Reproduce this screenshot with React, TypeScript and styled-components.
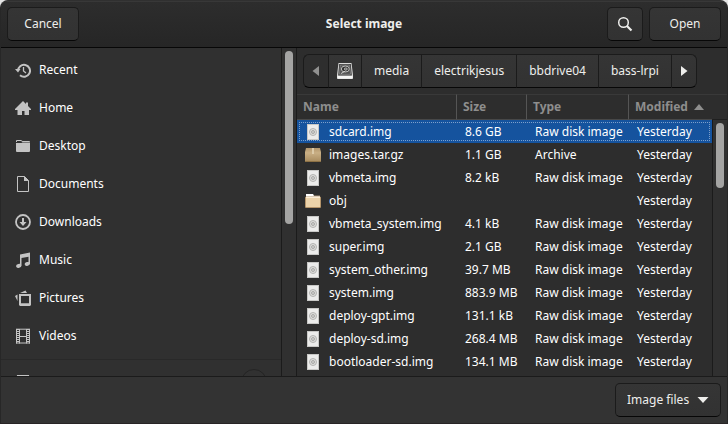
import React from "react";
import styled, { createGlobalStyle, css } from "styled-components";

const GlobalStyle = createGlobalStyle`
  * { box-sizing: border-box; }
  html, body { margin: 0; height: 100%; background: #e6e6e6; overflow: hidden; }
  body, button, select, table { font-family: "Noto Sans", sans-serif; font-size: 12px; line-height: 16px; }
`;

const Dialog = styled.div`
  display: flex;
  flex-direction: column;
  height: 100vh;
  overflow: hidden;
  color: #eeeeec;
  background: #333333;
  border: 1px solid #272727;
  border-top-color: #303030;
  border-bottom-color: #282425;
  border-radius: 8px 8px 0 0;
`;

const HeaderBar = styled.header`
  flex: none;
  display: grid;
  grid-template-columns: 1fr auto 1fr;
  align-items: center;
  height: 47px;
  padding: 0 6px;
  background: linear-gradient(#2d2d2d, #262626);
  box-shadow: inset 0 1px #383838;
  border-bottom: 1px solid #070707;
`;

const Title = styled.h1`
  margin: 0;
  font-size: 12px;
  font-weight: 700;
`;

const Actions = styled.div<{ $end?: boolean }>`
  display: flex;
  gap: 6px;
  justify-content: ${(p) => (p.$end ? "flex-end" : "flex-start")};
`;

const raised = css`
  color: #eeeeec;
  background: linear-gradient(#353535, #323232);
  border: 1px solid #1b1b1b;
  border-bottom-color: #070707;
`;

const Button = styled.button<{ $icon?: boolean }>`
  ${raised}
  display: flex;
  align-items: center;
  justify-content: center;
  height: 34px;
  min-width: ${(p) => (p.$icon ? 36 : 72)}px;
  padding: 0 ${(p) => (p.$icon ? 9 : 15)}px;
  border-radius: 5px;
`;

const Body = styled.div`
  flex: 1;
  min-height: 0;
  display: flex;
`;

const Sidebar = styled.nav`
  flex: none;
  width: 280px;
  overflow: hidden;
  background: #303030;
`;

const Places = styled.ul`
  list-style: none;
  margin: 0;
  padding: 3px 0;
`;

const Place = styled.li<{ $separated?: boolean }>`
  display: flex;
  align-items: center;
  justify-content: space-between;
  height: 38px;
  padding: 0 14px;
  ${(p) =>
    p.$separated &&
    css`
      box-shadow: 0 -3px #303030, 0 -4px #292929;
      margin-top: 8px;
    `}
`;

const PlaceLink = styled.a`
  display: flex;
  align-items: center;
  gap: 8px;
  color: #ffffff;
  text-decoration: none;
  svg { color: #c3c3c3; }
`;

const Eject = styled.button`
  width: 26px;
  height: 26px;
  padding: 0;
  border: 1px solid #242424;
  border-radius: 50%;
  background: #313131;
`;

const Icon = styled.svg`
  display: block;
  flex: none;
`;

const ScrollTrack = styled.div<{ $end?: boolean }>`
  flex: ${(p) => (p.$end ? "1" : "none")};
  width: ${(p) => (p.$end ? 15 : 16)}px;
  padding: 3px;
  background: #303030;
  border: 0 solid #1b1b1b;
  border-width: ${(p) => (p.$end ? "0 0 0 1px" : "0 1px")};
`;

const ScrollThumb = styled.div<{ $size: number }>`
  height: ${(p) => p.$size}px;
  width: 8px;
  margin: 0 auto;
  border-radius: 4px;
  background: #a4a4a3;
`;

const Browser = styled.main`
  flex: 1;
  min-width: 0;
  display: flex;
  flex-direction: column;
  background: #2d2d2d;
`;

const PathBar = styled.nav`
  flex: none;
  display: flex;
  height: 46px;
  padding: 6px;
`;

const PathButton = styled.button`
  ${raised}
  display: flex;
  align-items: center;
  justify-content: center;
  height: 34px;
  padding: 0 12px;
  border-right-width: 0;
  &:has(svg:only-child) { padding: 0 8px; }
  &:first-child { border-radius: 6px 0 0 6px; padding-left: 9px; background: #2e2e2e; color: #919190; }
  &:last-child { border-radius: 0 6px 6px 0; border-right-width: 1px; }
`;

const Listing = styled.div`
  flex: 1;
  min-height: 0;
  display: flex;
  overflow: hidden;
`;

const TableArea = styled.div`
  flex: 1;
  min-width: 0;
  overflow: hidden;
`;

const ListScroll = styled.div`
  flex: none;
  width: 15px;
  display: flex;
  flex-direction: column;
`;

const HeaderFill = styled.div`
  flex: none;
  height: 26px;
  border: solid #393939;
  border-width: 1px 0;
  border-bottom-color: #1f1f1f;
`;

const Table = styled.table`
  width: 100%;
  table-layout: fixed;
  border-collapse: separate;
  border-spacing: 0;
`;

const Col = styled.col<{ $w?: number }>`
  width: ${(p) => (p.$w ? `${p.$w}px` : "auto")};
`;

const Th = styled.th`
  height: 26px;
  padding: 0 0 0 6px;
  text-align: left;
  font-weight: 700;
  color: #8e8e8d;
  border-top: 1px solid #393939;
  border-bottom: 1px solid #484848;
  & + & { border-left: 1px solid #555555; }
`;

const SortLabel = styled.span`
  display: flex;
  align-items: center;
  gap: 6px;
`;

const Row = styled.tr<{ $selected?: boolean }>`
  color: #ffffff;
  ${(p) =>
    p.$selected &&
    css`
      background: #15539e;
      outline: 1px dotted #7d9fca;
      outline-offset: -3px;
    `}
`;

const Td = styled.td`
  height: 23px;
  padding: 0 0 0 9px;
  white-space: nowrap;
  &:first-child { padding-left: 8px; }
`;

const FileName = styled.span`
  display: flex;
  align-items: center;
  gap: 8px;
`;

const Footer = styled.footer`
  flex: none;
  display: flex;
  justify-content: flex-end;
  height: 47px;
  padding: 6px;
  background: #333333;
  border-top: 1px solid #1b1b1b;
`;

const FilterBox = styled.label`
  position: relative;
  display: flex;
  align-items: center;
`;

const Filter = styled.select`
  ${raised}
  appearance: none;
  height: 34px;
  padding: 0 30px 0 11px;
  border-radius: 5px;
  & + svg { position: absolute; right: 12px; pointer-events: none; }
`;

type Kind = "disk" | "archive" | "folder";

function FileIcon({ kind }: { kind: Kind }) {
  if (kind === "archive")
    return (
      <Icon width="16" height="16" viewBox="0 0 16 16">
        <defs>
          <linearGradient id="box" x1="0" y1="0" x2="0" y2="1">
            <stop offset="0" stopColor="#b3976c" />
            <stop offset="0.35" stopColor="#c9af85" />
            <stop offset="1" stopColor="#a78a5d" />
          </linearGradient>
        </defs>
        <path d="M1 1h14l1 4v9a1 1 0 0 1-1 1H1a1 1 0 0 1-1-1V5z" fill="url(#box)" />
        <path d="M7 1h2v6H7z" fill="#dccaa8" />
        <path d="M0 14h16l-.5 1H.5z" fill="#8d7145" />
      </Icon>
    );
  if (kind === "folder")
    return (
      <Icon width="16" height="16" viewBox="0 0 16 16">
        <path d="M1 1h7l1 1h6v3H1z" fill="#6b5f4f" />
        <path d="M1 1h7l1 2h6v1H1z" fill="#fff" />
        <rect x="0.500" y="4" width="15" height="10.500" rx=".5" fill="#ecd3aa" stroke="#b5946a" />
        <path d="M1 4.500h14" stroke="#fbecd4" />
      </Icon>
    );
  return (
    <Icon width="16" height="16" viewBox="0 0 16 16">
      <rect x="2" y="0" width="12" height="16" fill="#c8c8c6" />
      <rect x="3" y="1" width="10" height="14" fill="#ececeb" />
      <circle cx="8" cy="8" r="3.500" fill="#dededc" stroke="#b4b4b2" />
      <circle cx="8" cy="8" r="1.500" fill="#d0d0ce" stroke="#a9a9a7" />
    </Icon>
  );
}

function PlaceIcon({ name }: { name: string }) {
  const shapes: Record<string, React.ReactNode> = {
    Recent: (
      <>
        <path d="M3 9A6 6 0 1 1 5 13.300" fill="none" stroke="currentColor" strokeWidth="2" />
        <path d="M0 7h5.500L3 10.500z" fill="currentColor" />
        <path d="M8.500 5v4l2.500 2" fill="none" stroke="currentColor" strokeWidth="1.300" />
      </>
    ),
    Home: (
      <path d="M8 1 0 9v1h2.500v5H7v-4h2.500v4H14v-5h2V9l-3-3V2.500h-2V4z" fill="currentColor" />
    ),
    Desktop: (
      <>
        <path d="M1 3a1 1 0 0 1 1-1h4l1.500 1H14a1 1 0 0 1 1 1H7.500L6 3H2v1H1z" fill="currentColor" />
        <path d="M1 5h5.500l1-.5H15V13a1 1 0 0 1-1 1H2a1 1 0 0 1-1-1z" fill="currentColor" />
      </>
    ),
    Documents: (
      <>
        <path d="M2.500.5h7l4 4v11h-11z" fill="none" stroke="currentColor" />
        <path d="M9 0v5h5z" fill="currentColor" />
      </>
    ),
    Downloads: (
      <>
        <circle cx="8" cy="8" r="7" fill="none" stroke="currentColor" strokeWidth="1.800" />
        <path d="M7 4h2v4h2.500L8 12 4.500 8H7z" fill="currentColor" />
      </>
    ),
    Music: (
      <>
        <path d="M5 2.500 15 .5v4L6.500 6v7.500H5z" fill="currentColor" />
        <path d="M13.500 2H15v10h-1.500z" fill="currentColor" />
        <ellipse cx="3.800" cy="13.800" rx="2.700" ry="1.900" transform="rotate(-15 4 14)" fill="currentColor" />
        <ellipse cx="12.300" cy="12" rx="2.700" ry="1.900" transform="rotate(-15 12 12)" fill="currentColor" />
      </>
    ),
    Pictures: (
      <>
        <rect x="5" y="5" width="10" height="9.500" fill="none" stroke="currentColor" strokeWidth="2" />
        <path d="M5 13.500h10V16H5z" fill="currentColor" />
        <path d="M5 3 10.500.5 12 3zM0 6l2.500-1.500V11z" fill="currentColor" />
      </>
    ),
    Videos: (
      <>
        <path d="M1.500 1v14.500M4.500 1v14.500M11.500 1v14.500M14.500 1v14.500" stroke="currentColor" fill="none" />
        <path d="M1 1.200h14M1 15h14M4 8.500h8" stroke="currentColor" />
        <path d="M3 1v14M13 1v14" stroke="currentColor" strokeWidth="2" strokeDasharray="1 1" />
      </>
    ),
    Disk: <path d="M2 1h12l1 9v5H1v-5z" fill="currentColor" />,
  };
  return (
    <Icon width="16" height="16" viewBox="0 0 16 16" aria-hidden="true">
      {shapes[name]}
    </Icon>
  );
}

function Arrow({ d, w = 16 }: { d: string; w?: number }) {
  return (
    <Icon width={w} height="16" viewBox={`0 0 ${w} 16`} aria-hidden="true">
      <path d={d} fill="currentColor" />
    </Icon>
  );
}

function DriveIcon() {
  return (
    <Icon width="16" height="16" viewBox="0 0 16 16" aria-hidden="true">
      <path d="M1.500 0h13L16 12v3a1 1 0 0 1-1 1H1a1 1 0 0 1-1-1v-3z" fill="#d9d9d8" />
      <path d="M2.200 1h11.600l1 11.500H1.200z" fill="#343434" />
      <path d="M3.300 2h9.400l.8 9.300H2.500z" fill="#505050" stroke="#8c8c8b" strokeWidth="0.800" />
      <ellipse cx="8.300" cy="6" rx="4" ry="3" fill="#343434" stroke="#bcbcba" />
      <ellipse cx="8.800" cy="6" rx="1.500" ry="1" fill="none" stroke="#bcbcba" />
      <path d="M4 10.500 8.500 8" stroke="#d0d0ce" />
      <path d="M.5 13h15v2.500H.5z" fill="#f7f7f6" />
    </Icon>
  );
}

const places = ["Recent", "Home", "Desktop", "Documents", "Downloads", "Music", "Pictures", "Videos"];
const folders = ["media", "electrikjesus", "bbdrive04", "bass-lrpi"];

const files: { name: string; size?: string; kind: Kind }[] = [
  { name: "sdcard.img", size: "8.6 GB", kind: "disk" },
  { name: "images.tar.gz", size: "1.1 GB", kind: "archive" },
  { name: "vbmeta.img", size: "8.2 kB", kind: "disk" },
  { name: "obj", kind: "folder" },
  { name: "vbmeta_system.img", size: "4.1 kB", kind: "disk" },
  { name: "super.img", size: "2.1 GB", kind: "disk" },
  { name: "system_other.img", size: "39.7 MB", kind: "disk" },
  { name: "system.img", size: "883.9 MB", kind: "disk" },
  { name: "deploy-gpt.img", size: "131.1 kB", kind: "disk" },
  { name: "deploy-sd.img", size: "268.4 MB", kind: "disk" },
  { name: "bootloader-sd.img", size: "134.1 MB", kind: "disk" },
];

const typeNames: Record<Kind, string> = { disk: "Raw disk image", archive: "Archive", folder: "" };

export default function App() {
  return (
    <>
      <GlobalStyle />
      <Dialog role="dialog" aria-labelledby="title">
        <HeaderBar>
          <Actions>
            <Button>Cancel</Button>
          </Actions>
          <Title id="title">Select image</Title>
          <Actions $end>
            <Button $icon aria-label="Search">
              <Icon width="16" height="16" viewBox="0 0 16 16">
                <circle cx="6.500" cy="6.500" r="4.800" fill="none" stroke="currentColor" strokeWidth="1.500" />
                <path d="m10 10 4.500 4.500" stroke="currentColor" strokeWidth="2.200" />
              </Icon>
            </Button>
            <Button>Open</Button>
          </Actions>
        </HeaderBar>
        <Body>
          <Sidebar aria-label="Places">
            <Places>
              {places.map((name) => (
                <Place key={name}>
                  <PlaceLink href="#">
                    <PlaceIcon name={name} />
                    {name}
                  </PlaceLink>
                </Place>
              ))}
              <Place $separated>
                <PlaceLink href="#" aria-label="Drive">
                  <PlaceIcon name="Disk" />
                </PlaceLink>
                <Eject aria-label="Eject" />
              </Place>
            </Places>
          </Sidebar>
          <ScrollTrack>
            <ScrollThumb $size={173} />
          </ScrollTrack>
          <Browser>
            <PathBar aria-label="Path">
              <PathButton aria-label="Back">
                <Arrow w={8} d="M7 3v10L0.500 8z" />
              </PathButton>
              <PathButton aria-label="File system">
                <DriveIcon />
              </PathButton>
              {folders.map((name) => (
                <PathButton key={name}>{name}</PathButton>
              ))}
              <PathButton aria-label="Forward">
                <Arrow w={8} d="M1 3v10l6.500-5z" />
              </PathButton>
            </PathBar>
            <Listing>
              <TableArea>
                <Table>
                  <colgroup>
                    <Col />
                    <Col $w={70} />
                    <Col $w={102} />
                    <Col $w={84} />
                  </colgroup>
                  <thead>
                    <tr>
                      <Th>Name</Th>
                      <Th>Size</Th>
                      <Th>Type</Th>
                      <Th aria-sort="ascending">
                        <SortLabel>
                          Modified
                          <Arrow w={10} d="M0 11h10L5 5z" />
                        </SortLabel>
                      </Th>
                    </tr>
                  </thead>
                  <tbody>
                    {files.map((file, i) => (
                      <Row key={file.name} $selected={i === 0}>
                        <Td>
                          <FileName>
                            <FileIcon kind={file.kind} />
                            {file.name}
                          </FileName>
                        </Td>
                        <Td>{file.size}</Td>
                        <Td>{typeNames[file.kind]}</Td>
                        <Td>Yesterday</Td>
                      </Row>
                    ))}
                  </tbody>
                </Table>
              </TableArea>
              <ListScroll>
                <HeaderFill />
                <ScrollTrack $end>
                  <ScrollThumb $size={65} />
                </ScrollTrack>
              </ListScroll>
            </Listing>
          </Browser>
        </Body>
        <Footer>
          <FilterBox>
            <Filter aria-label="File type" defaultValue="images">
              <option value="images">Image files</option>
            </Filter>
            <Arrow w={12} d="M0.500 5h11L6 11z" />
          </FilterBox>
        </Footer>
      </Dialog>
    </>
  );
}
